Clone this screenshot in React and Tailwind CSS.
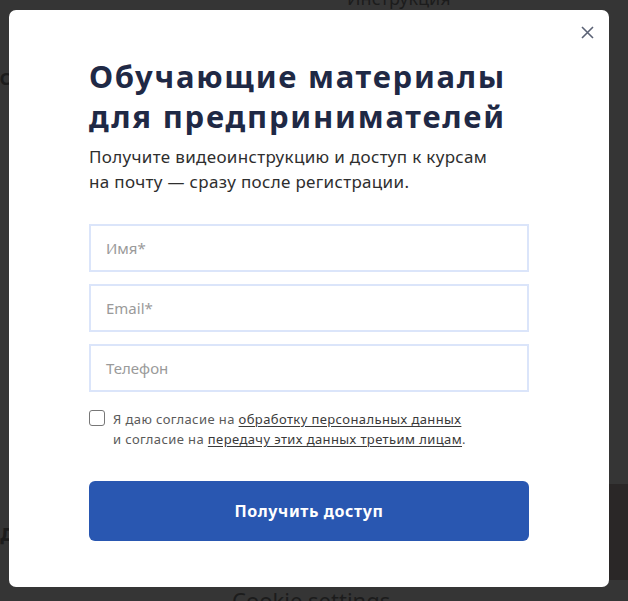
import React from "react";

export default function App() {
  const font = { fontFamily: '"Noto Sans", "Open Sans", sans-serif' };
  return (
    <div className="relative h-[601px] w-[628px] overflow-hidden bg-[#353535]" style={font}>
      {/* page behind the overlay */}
      <div className="absolute left-[347px] top-[-12px] text-[18px] leading-[20px] text-[#1c1c1c]">Инструкция</div>
      <div className="absolute left-[-14px] top-[60px] text-[22px] font-semibold text-[#1c1c1c]">ос</div>
      <div className="absolute left-[-14px] top-[514px] text-[24px] font-bold text-[#1c1c1c]">ад</div>
      <div className="absolute right-0 top-[484px] h-[96px] w-[19px] bg-[#2a2727]" />
      <div className="absolute left-[232px] top-[586px] text-[22px] leading-[28px] text-[#1c1c1c]">Cookie settings</div>

      {/* modal */}
      <div className="absolute inset-0 flex items-start justify-start pl-[9px] pt-[10px]">
        <div className="relative flex h-[577px] w-[600px] flex-col rounded-[7px] bg-white px-[80px] pt-[46px]">
          <button className="absolute right-[15px] top-[15px] flex h-[14px] w-[14px] items-center justify-center text-[#5b6275]">
            <svg width="13" height="13" viewBox="0 0 13 13" fill="none" stroke="currentColor" strokeWidth="1.6">
              <path d="M1 1L12 12M12 1L1 12" />
            </svg>
          </button>
          <h1 className="text-[31px] font-bold leading-[40px] tracking-[1.75px] text-[#1f2945]">
            Обучающие материалы<br />для предпринимателей
          </h1>
          <p className="mt-[8px] text-[17px] leading-[25px] tracking-[0.33px] text-[#2e2e2e]">
            Получите видеоинструкцию и доступ к курсам<br />на почту — сразу после регистрации.
          </p>
          <div className="mt-[30px] flex flex-col gap-[12px]">
            {["Имя*", "Email*", "Телефон"].map((p) => (
              <div key={p} className="box-border flex h-[48px] shrink-0 items-center border-2 border-[#dbe5fa] px-[15px] text-[15px] text-[#9a9a9a]">
                {p}
              </div>
            ))}
          </div>
          <div className="mt-[17px] flex gap-[8px]">
            <div className="mt-[1px] h-[16px] w-[16px] shrink-0 rounded-[3px] border border-[#777]" />
            <div className="text-[13px] leading-[20px] tracking-[0.4px] text-[#5a5a5a]">
              Я даю согласие на <span className="text-[#3a3a3a] underline underline-offset-2">обработку персональных данных</span>
              <br />и согласие на <span className="text-[#3a3a3a] underline underline-offset-2">передачу этих данных третьим лицам</span>.
            </div>
          </div>
          <button className="mt-[32px] flex h-[60px] w-full shrink-0 items-center justify-center rounded-[6px] bg-[#2957b1] text-[16px] font-bold tracking-[0.6px] text-white">
            Получить доступ
          </button>
        </div>
      </div>
    </div>
  );
}
